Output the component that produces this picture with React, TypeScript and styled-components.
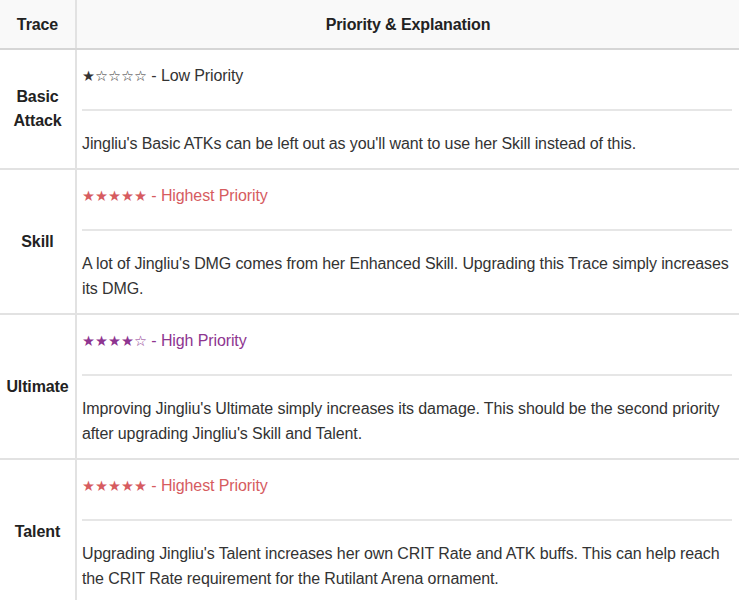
import styled, { createGlobalStyle } from "styled-components";

const GlobalStyle = createGlobalStyle`
  html, body {
    margin: 0;
    padding: 0;
    background: #fff;
  }
  body {
    font-family: "Liberation Sans", Arial, sans-serif;
    font-size: 16px;
    color: #333;
  }
`;

type Level = "low" | "high" | "highest";

const levelColor: Record<Level, string> = {
  low: "#333333",
  high: "#8e3590",
  highest: "#d65c5f",
};

const traces: {
  name: string;
  stars: string;
  label: string;
  level: Level;
  text: string;
}[] = [
  {
    name: "Basic Attack",
    stars: "★☆☆☆☆",
    label: "Low Priority",
    level: "low",
    text: "Jingliu's Basic ATKs can be left out as you'll want to use her Skill instead of this.",
  },
  {
    name: "Skill",
    stars: "★★★★★",
    label: "Highest Priority",
    level: "highest",
    text: "A lot of Jingliu's DMG comes from her Enhanced Skill. Upgrading this Trace simply increases its DMG.",
  },
  {
    name: "Ultimate",
    stars: "★★★★☆",
    label: "High Priority",
    level: "high",
    text: "Improving Jingliu's Ultimate simply increases its damage. This should be the second priority after upgrading Jingliu's Skill and Talent.",
  },
  {
    name: "Talent",
    stars: "★★★★★",
    label: "Highest Priority",
    level: "highest",
    text: "Upgrading Jingliu's Talent increases her own CRIT Rate and ATK buffs. This can help reach the CRIT Rate requirement for the Rutilant Arena ornament.",
  },
];

export default function App() {
  return (
    <>
      <GlobalStyle />
      <Table>
        <thead>
          <tr>
            <HeadCell $narrow>Trace</HeadCell>
            <HeadCell>Priority &amp; Explanation</HeadCell>
          </tr>
        </thead>
        <tbody>
          {traces.map((t) => (
            <Row key={t.name}>
              <TraceCell>
                {t.name.split(" ").map((w) => (
                  <div key={w}>{w}</div>
                ))}
              </TraceCell>
              <ExplCell>
                <Priority $level={t.level}>
                  <Stars>{t.stars}</Stars> - {t.label}
                </Priority>
                <Divider />
                <Body>{t.text}</Body>
              </ExplCell>
            </Row>
          ))}
        </tbody>
      </Table>
    </>
  );
}

const Table = styled.table`
  width: 739px;
  border-collapse: collapse;
  table-layout: fixed;
  line-height: 25px;
  letter-spacing: -0.11px;
`;

const HeadCell = styled.th<{ $narrow?: boolean }>`
  width: ${(p) => (p.$narrow ? "75px" : "auto")};
  height: 48px;
  padding: 0;
  background: #f9f9f9;
  font-weight: bold;
  color: #222;
  text-align: center;
  border-bottom: 2px solid #d6d6d6;
  border-left: 2px solid #e2e2e2;
  &:first-child {
    border-left: none;
  }
`;

const Row = styled.tr`
  border-bottom: 2px solid #e2e2e2;
`;

const TraceCell = styled.td`
  padding: 0;
  text-align: center;
  vertical-align: middle;
  font-weight: bold;
  line-height: 24px;
  color: #222;
`;

const ExplCell = styled.td`
  padding: 13px 7px 12px 5px;
  border-left: 2px solid #e2e2e2;
  vertical-align: top;
`;

const Priority = styled.p<{ $level: Level }>`
  margin: 0;
  color: ${(p) => levelColor[p.$level]};
`;

const Stars = styled.span`
  font-family: "DejaVu Sans", sans-serif;
  font-size: 14.5px;
  letter-spacing: 0;
`;

const Divider = styled.hr`
  margin: 20px 0 20px;
  border: none;
  border-top: 2px solid #e6e6e6;
`;

const Body = styled.p`
  margin: 0;
`;
